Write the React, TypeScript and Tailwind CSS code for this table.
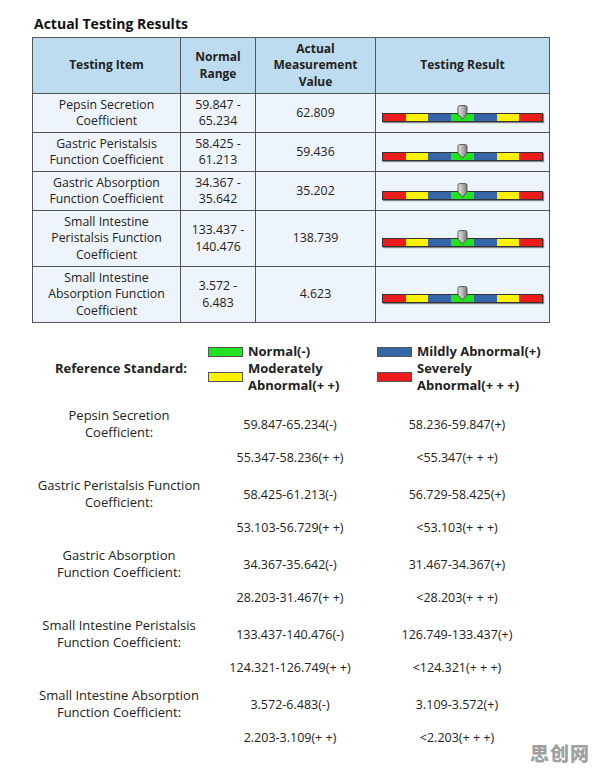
import React from "react";

type Row = { item: string[]; range: string[]; value: string };

const rows: Row[] = [
  { item: ["Pepsin Secretion", "Coefficient"], range: ["59.847 -", "65.234"], value: "62.809" },
  { item: ["Gastric Peristalsis", "Function Coefficient"], range: ["58.425 -", "61.213"], value: "59.436" },
  { item: ["Gastric Absorption", "Function Coefficient"], range: ["34.367 -", "35.642"], value: "35.202" },
  { item: ["Small Intestine", "Peristalsis Function", "Coefficient"], range: ["133.437 -", "140.476"], value: "138.739" },
  { item: ["Small Intestine", "Absorption Function", "Coefficient"], range: ["3.572 -", "6.483"], value: "4.623" },
];

const standards = [
  { label: ["Pepsin Secretion", "Coefficient:"], vals: ["59.847-65.234(-)", "58.236-59.847(+)", "55.347-58.236(+ +)", "<55.347(+ + +)"] },
  { label: ["Gastric Peristalsis Function", "Coefficient:"], vals: ["58.425-61.213(-)", "56.729-58.425(+)", "53.103-56.729(+ +)", "<53.103(+ + +)"] },
  { label: ["Gastric Absorption", "Function Coefficient:"], vals: ["34.367-35.642(-)", "31.467-34.367(+)", "28.203-31.467(+ +)", "<28.203(+ + +)"] },
  { label: ["Small Intestine Peristalsis", "Function Coefficient:"], vals: ["133.437-140.476(-)", "126.749-133.437(+)", "124.321-126.749(+ +)", "<124.321(+ + +)"] },
  { label: ["Small Intestine Absorption", "Function Coefficient:"], vals: ["3.572-6.483(-)", "3.109-3.572(+)", "2.203-3.109(+ +)", "<2.203(+ + +)"] },
];

// 7 equal segments, red-yellow-blue-green-blue-yellow-red
const segs = ["bg-[#ee1b1b]", "bg-[#fff200]", "bg-[#3566a8]", "bg-[#1fe41f]", "bg-[#3566a8]", "bg-[#fff200]", "bg-[#ee1b1b]"];

function ResultBar() {
  return (
    <div className="relative mx-auto h-[17px] w-[161px]">
      <div className="absolute bottom-0 left-0 flex h-[9px] w-[161px] border border-[#333] shadow-[1px_1px_1px_rgba(0,0,0,0.45)]">
        {segs.map((c, i) => (
          <div key={i} className={`${c} flex-1`} />
        ))}
      </div>
      <svg className="absolute left-[75px] top-0" width="11" height="15" viewBox="0 0 11 15">
        <defs>
          <linearGradient id="mk" x1="0" x2="1" y1="0" y2="0">
            <stop offset="0" stopColor="#e4e4e4" />
            <stop offset="0.5" stopColor="#b5b5b5" />
            <stop offset="1" stopColor="#7a7a7a" />
          </linearGradient>
        </defs>
        <path d="M1 2.4 Q1 0.6 2.8 0.6 H8.2 Q10 0.6 10 2.4 V9 L5.5 14.2 L1 9 Z" fill="url(#mk)" stroke="#4a4a4a" strokeWidth="0.9" />
      </svg>
    </div>
  );
}

function Lines({ lines }: { lines: string[] }) {
  return (
    <>
      {lines.map((l, i) => (
        <div key={i}>{l}</div>
      ))}
    </>
  );
}

export default function App() {
  return (
    <div
      className="relative h-[770px] w-[596px] bg-white pl-[32px] pt-[14px] text-[12px] leading-[16.5px] text-[#222]"
      style={{ fontFamily: '"Open Sans", "Noto Sans", sans-serif' }}
    >
      <h1 className="mb-[3px] pl-[2px] text-[14px] font-bold leading-[20px] text-[#111]">Actual Testing Results</h1>

      <table className="w-[517px] table-fixed border-collapse text-center">
        <colgroup>
          <col className="w-[148px]" />
          <col className="w-[75px]" />
          <col className="w-[120px]" />
          <col className="w-[174px]" />
        </colgroup>
        <thead>
          <tr className="h-[56px] bg-[#bddcef] font-bold">
            <th className="border border-[#555]">Testing Item</th>
            <th className="border border-[#555]">
              <Lines lines={["Normal", "Range"]} />
            </th>
            <th className="border border-[#555]">
              <Lines lines={["Actual", "Measurement", "Value"]} />
            </th>
            <th className="border border-[#555]">Testing Result</th>
          </tr>
        </thead>
        <tbody className="text-[12.3px]">
          {rows.map((r, i) => (
            <tr key={i} className={`${r.item.length > 2 ? "h-[56px]" : "h-[39px]"} bg-[#eef4fb]`}>
              <td className="border border-[#555]">
                <Lines lines={r.item} />
              </td>
              <td className="border border-[#555]">
                <Lines lines={r.range} />
              </td>
              <td className="border border-[#555]">{r.value}</td>
              <td className="border border-[#555]">
                <ResultBar />
              </td>
            </tr>
          ))}
        </tbody>
      </table>

      {/* legend */}
      <div className="mt-[20px] flex text-[13px] font-bold leading-[17px]">
        <div className="flex w-[176px] items-center pl-[23px]">Reference Standard:</div>
        <div className="grid grid-cols-[169px_169px]">
          <div className="flex items-center">
            <span className="mr-[5px] h-[10px] w-[35px] border border-[#555] bg-[#1fe41f]" />
            Normal(-)
          </div>
          <div className="flex items-center">
            <span className="mr-[5px] h-[10px] w-[35px] border border-[#555] bg-[#3566a8]" />
            Mildly Abnormal(+)
          </div>
          <div className="flex items-center">
            <span className="mr-[5px] h-[10px] w-[35px] border border-[#555] bg-[#fff200]" />
            <div>
              <div>Moderately</div>
              <div>Abnormal(+ +)</div>
            </div>
          </div>
          <div className="flex items-center">
            <span className="mr-[5px] h-[10px] w-[35px] border border-[#555] bg-[#ee1b1b]" />
            <div>
              <div>Severely</div>
              <div>Abnormal(+ + +)</div>
            </div>
          </div>
        </div>
      </div>

      {/* reference values */}
      <div className="-ml-[32px] mt-[13px] text-[12.5px]">
        {standards.map((s, i) => (
          <div key={i} className="mb-[4px] grid grid-cols-[238px_104px_230px] leading-[17px]">
            <div className="flex h-[34px] flex-col items-center justify-center text-center text-[13px]">
              <Lines lines={s.label} />
            </div>
            <div className="flex h-[34px] items-center justify-center whitespace-nowrap">{s.vals[0]}</div>
            <div className="flex h-[34px] items-center justify-center whitespace-nowrap">{s.vals[1]}</div>
            <div className="h-[32px]" />
            <div className="flex h-[32px] items-center justify-center whitespace-nowrap">{s.vals[2]}</div>
            <div className="flex h-[32px] items-center justify-center whitespace-nowrap">{s.vals[3]}</div>
          </div>
        ))}
      </div>

      <div
        className="absolute bottom-[9px] right-[6px] text-[19px] font-black tracking-[1px] text-[#a0a0a0]"
        style={{ fontFamily: '"Noto Sans CJK SC", sans-serif' }}
      >
        思创网
      </div>
    </div>
  );
}
